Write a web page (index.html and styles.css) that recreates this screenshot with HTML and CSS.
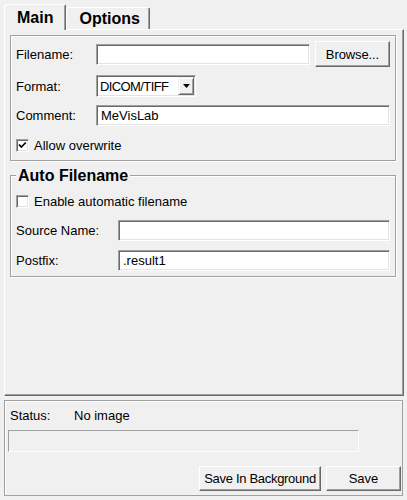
FILE: index.html
```html
<!DOCTYPE html>
<html>
<head>
<meta charset="utf-8">
<link rel="stylesheet" href="styles.css">
</head>
<body>
<div class="window">
  <div class="tabs">
    <div class="tab active">Main</div>
    <div class="tab">Options</div>
  </div>
  <div class="pane">
    <div class="group">
      <div class="row row-file">
        <span class="label">Filename:</span>
        <span class="input grow"></span>
        <span class="button browse">Browse...</span>
      </div>
      <div class="row row-format">
        <span class="label">Format:</span>
        <span class="combo">
          <span class="combo-text">DICOM/TIFF</span>
          <span class="combo-btn"><svg width="7" height="4" viewBox="0 0 7 4"><polygon points="0,0 7,0 3.5,4" fill="#000"/></svg></span>
        </span>
      </div>
      <div class="row row-comment">
        <span class="label">Comment:</span>
        <span class="input grow">MeVisLab</span>
      </div>
      <div class="row row-check first-check">
        <span class="checkbox"><svg width="11" height="11" viewBox="0 0 11 11"><path d="M2 4.5 L4.3 7 L8.8 2.5" fill="none" stroke="#000" stroke-width="1.7"/></svg></span>
        <span class="check-label">Allow overwrite</span>
      </div>
    </div>

    <div class="group group2">
      <div class="group-title">Auto Filename</div>
      <div class="row row-check2">
        <span class="checkbox"></span>
        <span class="check-label">Enable automatic filename</span>
      </div>
      <div class="row row-source">
        <span class="label wide">Source Name:</span>
        <span class="input grow"></span>
      </div>
      <div class="row row-postfix">
        <span class="label wide">Postfix:</span>
        <span class="input grow">.result1</span>
      </div>
    </div>
  </div>

  <div class="status-panel">
    <div class="status-row">
      <span class="status-label">Status:</span>
      <span class="status-value">No image</span>
    </div>
    <div class="progress"></div>
    <div class="actions">
      <span class="button bg">Save In Background</span>
      <span class="button save">Save</span>
    </div>
  </div>
</div>
</body>
</html>
```

FILE: styles.css
```css
* { box-sizing: border-box; }
html, body { margin: 0; padding: 0; }
body {
  width: 407px;
  height: 500px;
  overflow: hidden;
  background: #f0f0f0;
  color: #000;
  font-family: "Liberation Sans", Arial, sans-serif;
  font-size: 13px;
}
.window {
  display: flex;
  flex-direction: column;
  height: 500px;
  padding: 4px 3px 4px 4px;
}

/* tabs */
.tabs {
  display: flex;
  align-items: flex-end;
  height: 25px;
  position: relative;
  z-index: 1;
}
.tab {
  height: 22px;
  line-height: 22px;
  padding: 0 9px 0 12px;
  font-size: 16px;
  font-weight: bold;
  background: #f0f0f0;
  border-top: 1px solid #fff;
  border-left: 1px solid #fff;
  border-right: 1px solid #696969;
  box-shadow: inset -1px 0 #a0a0a0;
  border-radius: 3px 2px 0 0;
}
.tab.active {
  height: 26px;
  line-height: 26px;
  margin-bottom: -1px;
  padding: 0 12px;
}

/* pane */
.pane {
  flex: 1;
  display: flex;
  flex-direction: column;
  padding: 5px 7px 0 5px;
  border-top: 1px solid #fff;
  border-left: 1px solid #fff;
  border-right: 1px solid #696969;
  border-bottom: 1px solid #696969;
  box-shadow: inset -1px -1px #a0a0a0;
}
.group {
  display: flex;
  flex-direction: column;
  padding: 5px 5px 8px 5px;
  border: 1px solid #a0a0a0;
  box-shadow: inset 1px 1px #fff, 1px 1px 0 #fff;
}
.row {
  display: flex;
  align-items: center;
}
.row-file { height: 26px; }
.row-format { height: 22px; margin-top: 8px; }
.row-comment { height: 21px; margin-top: 8px; }
.first-check { height: 13px; margin-top: 13px; }
.label { width: 80px; flex: none; }
.label.wide { width: 102px; }
.grow { flex: 1; }

.input {
  height: 21px;
  line-height: 19px;
  padding: 0 4px;
  background: #fff;
  border-top: 1px solid #a0a0a0;
  border-left: 1px solid #a0a0a0;
  border-right: 1px solid #fff;
  border-bottom: 1px solid #fff;
  box-shadow: inset 1px 1px #696969, inset -1px -1px #e3e3e3;
  white-space: nowrap;
}
.button {
  display: flex;
  align-items: center;
  justify-content: center;
  background: #f0f0f0;
  border-top: 1px solid #fff;
  border-left: 1px solid #fff;
  border-right: 1px solid #696969;
  border-bottom: 1px solid #696969;
  box-shadow: inset -1px -1px #a0a0a0;
  white-space: nowrap;
}
.browse { width: 75px; height: 26px; margin-left: 5px; letter-spacing: -0.1px; }

.combo {
  display: flex;
  align-items: center;
  width: 100px;
  height: 22px;
  padding: 1px;
  background: #fff;
  border-top: 1px solid #a0a0a0;
  border-left: 1px solid #a0a0a0;
  border-right: 1px solid #fff;
  border-bottom: 1px solid #fff;
  box-shadow: inset 1px 1px #696969, inset -1px -1px #e3e3e3;
}
.combo-text { flex: 1; padding-left: 2px; white-space: nowrap; letter-spacing: -0.6px; }
.combo-btn {
  display: flex;
  align-items: center;
  justify-content: center;
  width: 16px;
  height: 18px;
  background: #f0f0f0;
  border-top: 1px solid #f0f0f0;
  border-left: 1px solid #f0f0f0;
  border-right: 1px solid #696969;
  border-bottom: 1px solid #696969;
  box-shadow: inset 1px 1px #fff, inset -1px -1px #a0a0a0;
}

.checkbox {
  display: flex;
  align-items: center;
  justify-content: center;
  width: 13px;
  height: 13px;
  flex: none;
  background: #fff;
  border-top: 1px solid #a0a0a0;
  border-left: 1px solid #a0a0a0;
  border-right: 1px solid #fff;
  border-bottom: 1px solid #fff;
  box-shadow: inset 1px 1px #696969, inset -1px -1px #e3e3e3;
}
.check-label { margin-left: 5px; }

/* group 2 */
.group2 {
  margin-top: 14px;
  padding-bottom: 5px;
}
.group-title {
  width: max-content;
  margin: -15px 0 0 0;
  padding: 0 2px;
  font-size: 16px;
  font-weight: bold;
  line-height: 19px;
  background: #f0f0f0;
}
.row-check2 { height: 21px; margin-top: 6px; }
.row-source { height: 21px; margin-top: 8px; }
.row-postfix { height: 21px; margin-top: 9px; }

/* status panel */
.status-panel {
  flex: none;
  height: 96px;
  margin-top: 4px;
  margin-right: 1px;
  padding: 7px 1px 4px 3px;
  display: flex;
  flex-direction: column;
  border: 1px solid #a0a0a0;
  box-shadow: inset 1px 1px #fff;
}
.status-row {
  display: flex;
  height: 15px;
  line-height: 15px;
  padding-left: 2px;
}
.status-label { width: 64px; }
.progress {
  width: 351px;
  height: 22px;
  margin-top: 7px;
  border-top: 1px solid #a0a0a0;
  border-left: 1px solid #a0a0a0;
  border-right: 1px solid #fff;
  border-bottom: 1px solid #fff;
}
.actions {
  display: flex;
  justify-content: flex-end;
  gap: 5px;
  margin-top: 14px;
}
.actions .button { height: 25px; }
.bg { width: 122px; letter-spacing: -0.3px; }
.save { width: 75px; }
```
